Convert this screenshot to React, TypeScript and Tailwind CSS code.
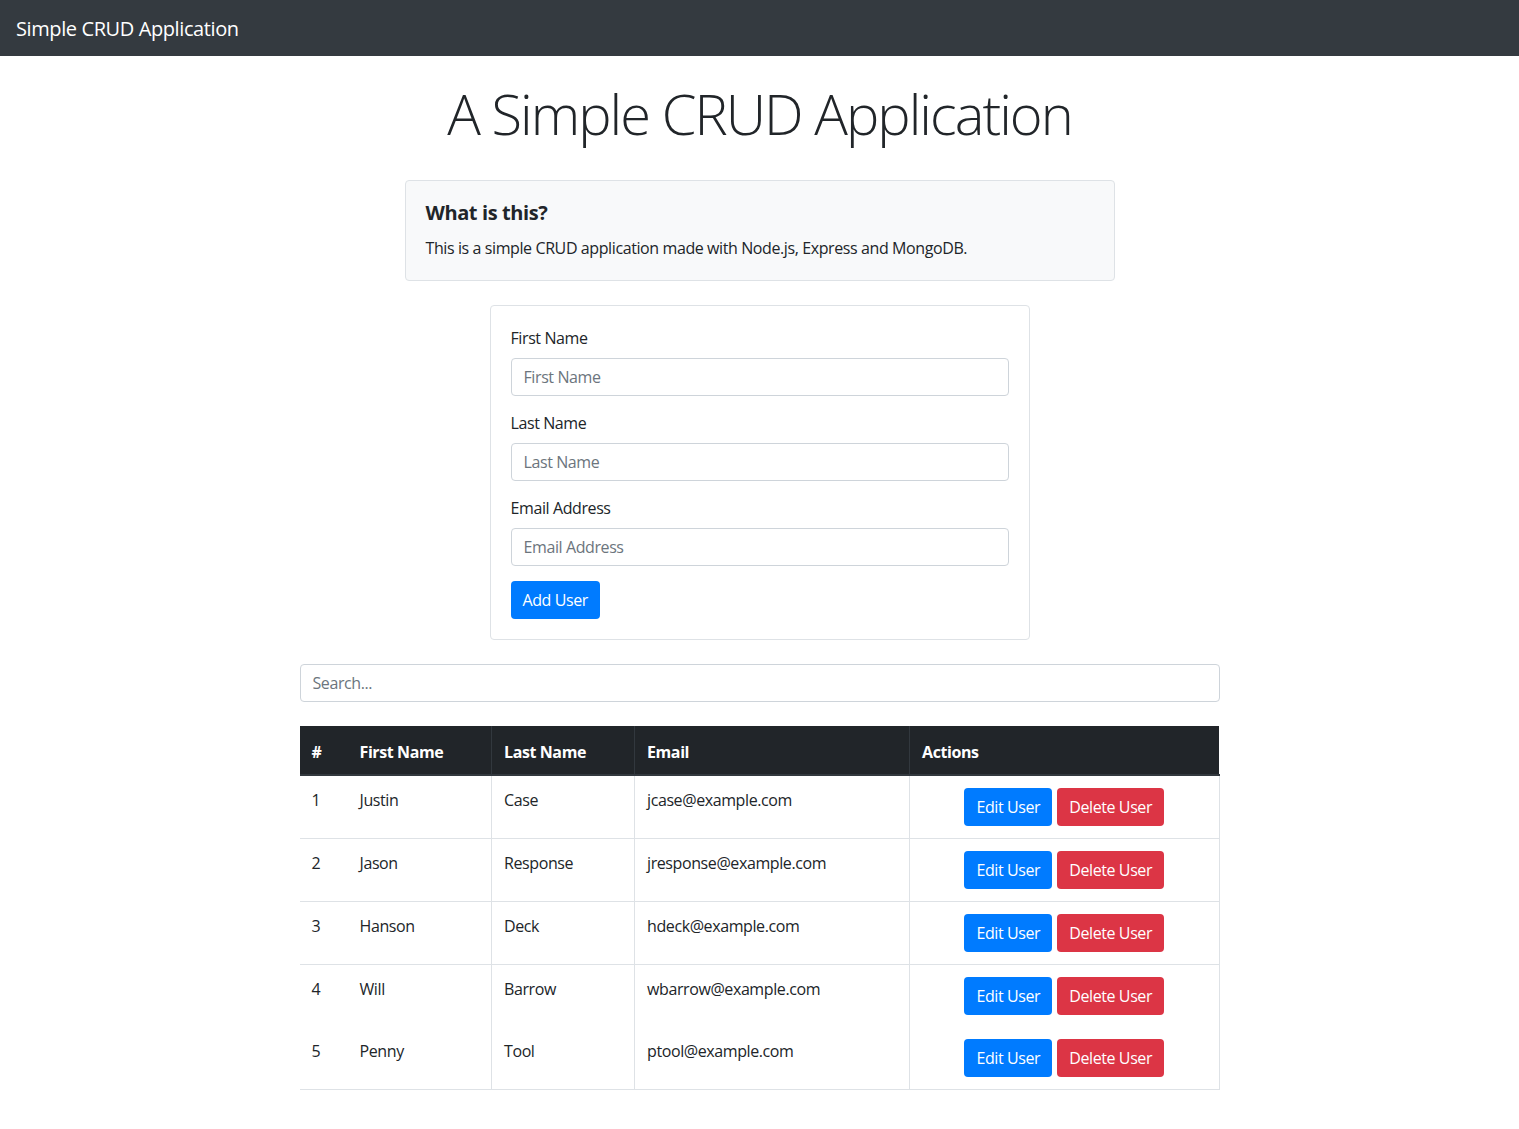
import React from 'react';

type User = { id: number; first: string; last: string; email: string };

const users: User[] = [
  { id: 1, first: 'Justin', last: 'Case', email: 'jcase@example.com' },
  { id: 2, first: 'Jason', last: 'Response', email: 'jresponse@example.com' },
  { id: 3, first: 'Hanson', last: 'Deck', email: 'hdeck@example.com' },
  { id: 4, first: 'Will', last: 'Barrow', email: 'wbarrow@example.com' },
  { id: 5, first: 'Penny', last: 'Tool', email: 'ptool@example.com' },
];

function Field({ label }: { label: string }) {
  return (
    <div className="mb-[15px]">
      <label className="block mb-2 leading-6">{label}</label>
      <input
        type="text"
        placeholder={label}
        className="block w-full h-[38px] px-3 border border-[#ced4da] rounded-[4px] text-base tracking-[-0.025em] text-[#495057] placeholder:text-[#6c757d] outline-none"
      />
    </div>
  );
}

export default function App() {
  return (
    <div className="min-h-screen bg-white text-[#212529] text-base leading-6 tracking-[-0.025em] font-['Segoe_UI','Open_Sans',sans-serif]">
      {/* navbar */}
      <nav className="h-14 bg-[#343a40] flex items-center px-4">
        <span className="text-white text-xl mt-[2px]">Simple CRUD Application</span>
      </nav>

      <div className="w-[920px] mx-auto">
        <h1 className="mt-6 text-center text-[56px] leading-[1.2] font-light tracking-[-0.035em]">A Simple CRUD Application</h1>

        {/* intro */}
        <div className="w-[710px] mx-auto mt-[33px] bg-[#f8f9fa] border border-[#dee2e6] rounded-[4px] p-5">
          <h5 className="text-xl font-bold leading-6 mb-[11px]">What is this?</h5>
          <p>This is a simple CRUD application made with Node.js, Express and MongoDB.</p>
        </div>

        {/* form */}
        <div className="w-[540px] mx-auto mt-6 border border-[#dee2e6] rounded-[4px] p-5">
          <Field label="First Name" />
          <Field label="Last Name" />
          <Field label="Email Address" />
          <button className="h-[38px] px-3 rounded-[4px] bg-[#007bff] text-white">Add User</button>
        </div>

        {/* search */}
        <input
          type="text"
          placeholder="Search..."
          className="block w-full mt-6 h-[38px] px-3 border border-[#ced4da] rounded-[4px] text-base tracking-[-0.025em] placeholder:text-[#6c757d] outline-none"
        />

        {/* table */}
        <table className="w-full mt-6 border-collapse table-fixed">
          <thead>
            <tr className="bg-[#212529] text-white font-bold text-left">
              <th className="w-12 px-3 pt-[14px] pb-[10px] border-b-2 border-[#32383e]">#</th>
              <th className="w-36 px-3 pt-[14px] pb-[10px] border-b-2 border-[#32383e]">First Name</th>
              <th className="w-[143px] px-3 pt-[14px] pb-[10px] border-b-2 border-l border-[#32383e]">Last Name</th>
              <th className="w-[275px] px-3 pt-[14px] pb-[10px] border-b-2 border-l border-[#32383e]">Email</th>
              <th className="px-3 pt-[14px] pb-[10px] border-b-2 border-l border-[#32383e]">Actions</th>
            </tr>
          </thead>
          <tbody>
            {users.map((u, i) => (
              <tr key={u.id} className={i === 3 ? '' : 'border-b border-[#dee2e6]'}>
                <td className="p-3 align-top">{u.id}</td>
                <td className="p-3 align-top">{u.first}</td>
                <td className="p-3 align-top border-l border-[#dee2e6]">{u.last}</td>
                <td className="p-3 align-top border-l border-[#dee2e6]">{u.email}</td>
                <td className="p-3 text-center border-l border-r border-[#dee2e6]">
                  <div className="flex justify-center gap-[5px]">
                    <button className="h-[38px] px-3 rounded-[4px] bg-[#007bff] text-white">Edit User</button>
                    <button className="h-[38px] px-3 rounded-[4px] bg-[#dc3545] text-white">Delete User</button>
                  </div>
                </td>
              </tr>
            ))}
          </tbody>
        </table>
        <div className="h-10" />
      </div>
    </div>
  );
}
